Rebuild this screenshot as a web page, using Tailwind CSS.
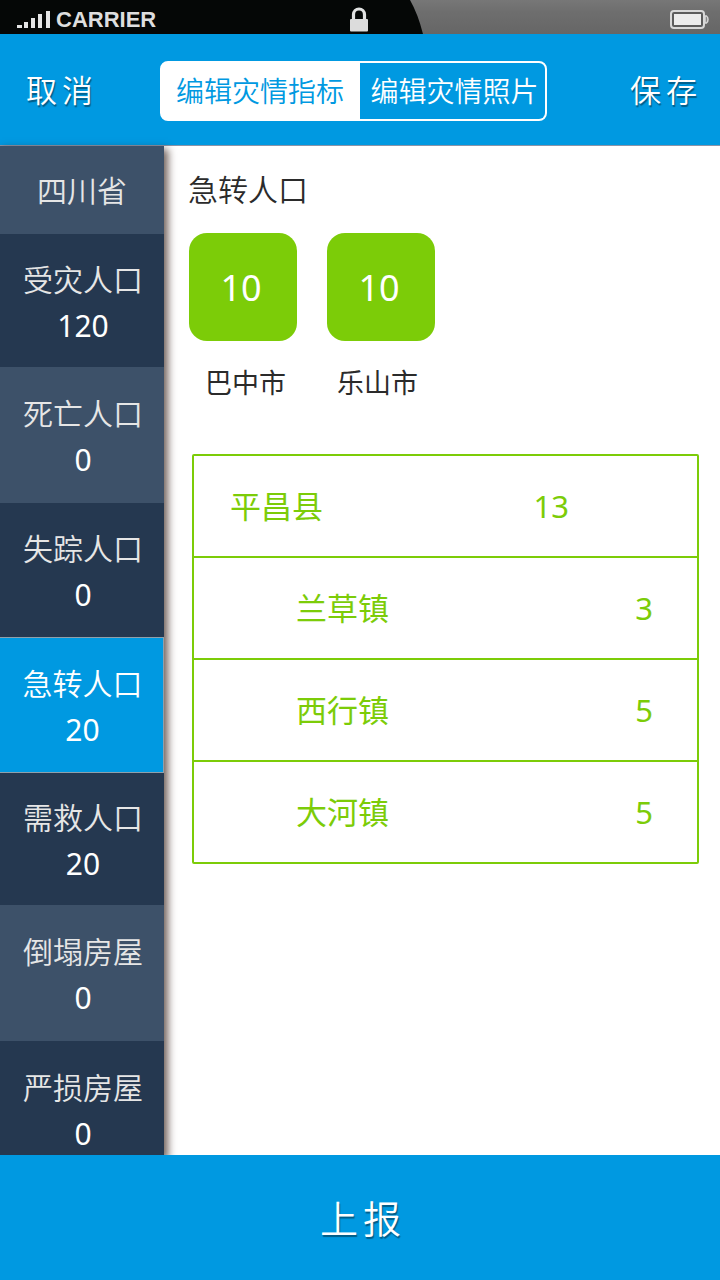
<!DOCTYPE html>
<html lang="zh-CN">
<head>
<meta charset="utf-8">
<meta name="viewport" content="width=device-width, initial-scale=1">
<title>编辑灾情指标</title>
<script src="https://cdn.jsdelivr.net/npm/@tailwindcss/browser@4"></script>
</head>
<body class="flex h-screen flex-col overflow-hidden bg-white font-['Noto_Sans','Noto_Sans_CJK_SC',sans-serif] font-[350] text-white">

<div class="relative flex h-[34px] shrink-0 items-center justify-between bg-[#050706] pt-1 pr-[11px] pl-4">
  <svg class="absolute inset-y-0 right-0 h-full w-[310px]" viewBox="0 0 310 34" preserveAspectRatio="none" aria-hidden="true">
    <defs><linearGradient id="metal" x1="0" y1="0" x2="0" y2="1"><stop offset="0" stop-color="#777"/><stop offset=".35" stop-color="#6e6e6e"/><stop offset="1" stop-color="#666"/></linearGradient></defs>
    <path d="M0 0H310V34H13Q8 14 0 0Z" fill="url(#metal)"/>
  </svg>
  <div class="flex items-center gap-[5px] pt-0.5">
    <svg class="h-[18px] w-[35px]" viewBox="0 0 35 18" fill="#e4e4e4" aria-hidden="true">
      <path d="M1 14h5v3H1zM8 11h4v6H8zM15 7h4v10h-4zM22 3h4v14h-4zM30 0h4v17h-4z"/>
    </svg>
    <span class="font-['Liberation_Sans',sans-serif] text-[22px] leading-6 font-bold text-[#dedede]">CARRIER</span>
  </div>
  <svg class="absolute top-[7px] left-1/2 h-[25px] w-5 -translate-x-[11px]" viewBox="0 0 20 25" aria-hidden="true">
    <path d="M4.500 13V7.500a5.500 5.500 0 0 1 11 0V13" fill="none" stroke="#e2e2e2" stroke-width="3.200"/>
    <rect x="1" y="12" width="18" height="12.500" rx="1" fill="#dcdcdc"/>
  </svg>
  <svg class="relative h-5 w-10" viewBox="0 0 40 20" aria-hidden="true">
    <rect x="2" y="2" width="33" height="17" rx="3" fill="#5c5c5c" stroke="#d8d8d8" stroke-width="2"/>
    <rect x="5" y="5" width="27" height="11" fill="#ececec"/>
    <path d="M36 7h1.500q1.500 1 1.500 3.500t-1.500 3.500H36z" fill="#888" stroke="#d8d8d8" stroke-width="1.500"/>
  </svg>
</div>

<header class="flex h-28 shrink-0 items-center justify-between border-b border-[#8a94a8] bg-[#0099e1] pr-[18px] pl-[26px]">
  <button type="button" class="text-[31px] leading-10 tracking-[5px] text-shadow-[1px_2px_1px_#00000066]">取消</button>
  <nav class="mt-0.5 mr-[31px] ml-auto flex h-[60px] w-[387px] overflow-hidden rounded-lg border-2 border-white bg-white text-[28px] leading-[56px]" aria-label="编辑内容">
    <button type="button" class="w-[198px] pr-0.5 text-[#0099e1]">编辑灾情指标</button>
    <button type="button" class="flex-1 bg-[#0099e1] pl-1 whitespace-nowrap">编辑灾情照片</button>
  </nav>
  <button type="button" class="ml-[52px] text-[31px] leading-10 tracking-[5px] text-shadow-[1px_2px_1px_#00000066]">保存</button>
</header>

<main class="flex min-h-0 flex-1">
  <aside class="relative z-10 w-[164px] shrink-0 bg-[#253850] shadow-[3px_4px_8px_1px_#301810b0]">
    <ul class="h-full overflow-hidden text-[30px] text-[#e6e6e6]">
      <li class="h-[88px] bg-[#3d5169]"><button type="button" class="size-full">四川省</button></li>
      <li class="h-[133px] bg-[#253850]"><button type="button" class="flex size-full flex-col items-center justify-center pt-1 pl-0.5 leading-[46px]"><span>受灾人口</span><span class="font-normal text-white">120</span></button></li>
      <li class="h-[136px] bg-[#3d5169]"><button type="button" class="flex size-full flex-col items-center justify-center pt-1 pl-0.5 leading-[46px]"><span>死亡人口</span><span class="font-normal text-white">0</span></button></li>
      <li class="h-[134px] bg-[#253850]"><button type="button" class="flex size-full flex-col items-center justify-center pt-1 pl-0.5 leading-[46px]"><span>失踪人口</span><span class="font-normal text-white">0</span></button></li>
      <li class="h-[136px] border border-l-0 border-[#8fa0ac] bg-[#0099e1] text-white"><button type="button" aria-current="true" class="flex size-full flex-col items-center justify-center pt-1 pl-0.5 leading-[46px]"><span>急转人口</span><span class="font-normal">20</span></button></li>
      <li class="h-[132px] bg-[#253850]"><button type="button" class="flex size-full flex-col items-center justify-center pt-1 pl-0.5 leading-[46px]"><span>需救人口</span><span class="font-normal text-white">20</span></button></li>
      <li class="h-[136px] bg-[#3d5169]"><button type="button" class="flex size-full flex-col items-center justify-center pt-1 pl-0.5 leading-[46px]"><span>倒塌房屋</span><span class="font-normal text-white">0</span></button></li>
      <li class="h-[136px] bg-[#253850]"><button type="button" class="flex size-full flex-col items-center justify-center pt-1 pl-0.5 leading-[46px]"><span>严损房屋</span><span class="font-normal text-white">0</span></button></li>
    </ul>
  </aside>

  <section class="min-w-0 flex-1 overflow-hidden pt-6 pr-[21px] pl-6 text-[#2b2b2b]">
    <h1 class="text-[30px] leading-10 font-[350]">急转人口</h1>
    <div class="mt-[23px] flex gap-[30px] pl-px text-[36px] font-normal text-white">
      <button type="button" class="size-[108px] rounded-[18px] bg-[#7ccc08] pt-0.5 pr-1" aria-labelledby="city-1">10</button>
      <button type="button" class="size-[108px] rounded-[18px] bg-[#7ccc08] pt-0.5 pr-1" aria-labelledby="city-2">10</button>
    </div>
    <div class="mt-[22px] flex gap-[51px] pl-[17px] text-[27px] leading-10 font-normal">
      <span id="city-1">巴中市</span>
      <span id="city-2">乐山市</span>
    </div>
    <div class="mt-[51px] ml-1 overflow-hidden rounded-xs border-2 border-[#7ccc08]">
      <table class="w-full border-collapse text-left text-[31px] font-normal text-[#7ccc08]">
        <tbody class="divide-y-2 divide-[#7ccc08]">
          <tr class="h-[101px]"><th scope="row" class="pl-9 font-normal">平昌县</th><td class="pr-32 text-right">13</td></tr>
          <tr class="h-[102px]"><th scope="row" class="pl-[102px] font-normal">兰草镇</th><td class="pr-11 text-right">3</td></tr>
          <tr class="h-[102px]"><th scope="row" class="pl-[102px] font-normal">西行镇</th><td class="pr-11 text-right">5</td></tr>
          <tr class="h-[101px]"><th scope="row" class="pl-[102px] font-normal">大河镇</th><td class="pr-11 text-right">5</td></tr>
        </tbody>
      </table>
    </div>
  </section>
</main>

<footer class="z-20 h-[125px] shrink-0 bg-[#0099e1]">
  <button type="button" class="size-full pt-0.5 pl-1.5 text-[38px] tracking-[5px] text-shadow-[1px_2px_1px_#00000066]">上报</button>
</footer>
</body>
</html>
